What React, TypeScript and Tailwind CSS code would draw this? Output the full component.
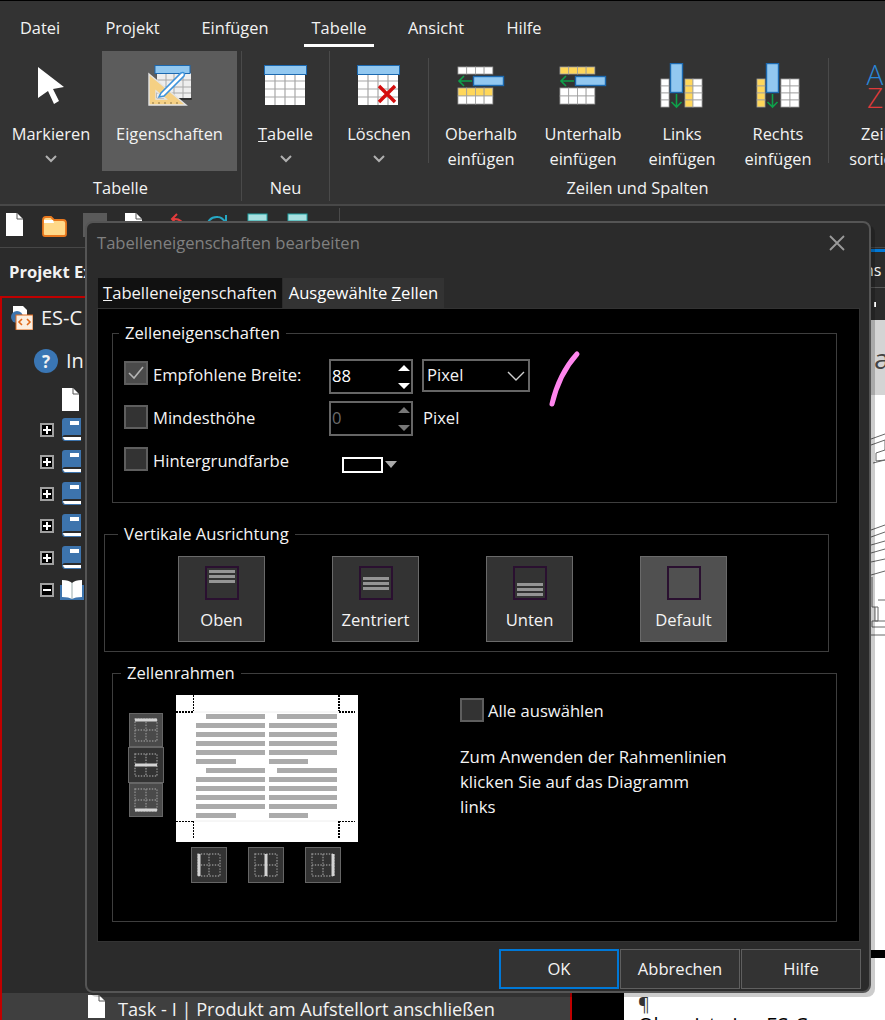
import React from 'react';

const Chevron = () => (
  <svg width="12" height="8" viewBox="0 0 12 8" fill="none" stroke="#b0b0b0" strokeWidth="2">
    <path d="M1 1l5 5 5-5" />
  </svg>
);

// white table with blue header, shared by the ribbon icons
const TableGrid = ({ x = 0, y = 0 }: { x?: number; y?: number }) => (
  <g transform={`translate(${x} ${y})`}>
    <rect x="1" y="9" width="40" height="31" fill="#fff" />
    <path d="M11 9v31M21 9v31M31 9v31M1 16h40M1 24h40M1 32h40" stroke="#a8a8a8" strokeWidth="1.2" />
    <rect x=".5" y=".5" width="42" height="9" fill="#92c8f0" stroke="#1c69b0" />
  </g>
);

const NewTableIcon = () => (
  <svg width="44" height="42" viewBox="0 0 44 42"><TableGrid /></svg>
);

const DeleteTableIcon = () => (
  <svg width="44" height="42" viewBox="0 0 44 42">
    <TableGrid />
    <path d="M22 21l16 16M38 21L22 37" stroke="#d40c0c" strokeWidth="3.4" />
  </svg>
);

const PropsIcon = () => (
  <svg width="44" height="42" viewBox="0 0 44 42">
    <rect x="9" y="8" width="34" height="25" fill="#eee" />
    <path d="M18 8v25M26 8v25M35 8v25M9 15h34M9 22h34M9 28h34" stroke="#a8a8a8" />
    <rect x="7" y=".5" width="35" height="8" fill="#92c8f0" stroke="#1c69b0" />
    <path d="M43 33v1H30" stroke="#222" strokeWidth="1.5" fill="none" />
    <path fillRule="evenodd" d="M1 9l37 31H1zM8 26v8h10z" fill="#f5d084" stroke="#e4e4e4" strokeWidth="1.4" />
    <path d="M5 37v2M11 37v2M17 37v2M23 37v2M29 37v2" stroke="#8a7340" />
    <path d="M13 28L33 8q2-1 3 0t0 3L16 31l-5 1z" fill="#fff" stroke="#3d93dc" strokeWidth="1.6" />
  </svg>
);

const Cells = ({ x, y, cols, rows, w, h, fill }: { x: number; y: number; cols: number; rows: number; w: number; h: number; fill: string }) => (
  <g fill={fill} stroke="#a0a0a0" strokeWidth=".8">
    {Array.from({ length: rows * cols }).map((_, i) => (
      <rect key={i} x={x + (i % cols) * w} y={y + Math.floor(i / cols) * h} width={w} height={h} />
    ))}
  </g>
);

const RowInsertIcon = ({ above }: { above: boolean }) => (
  <svg width="48" height="40" viewBox="0 0 48 40">
    <Cells x={1} y={1} cols={4} rows={1} w={8.7} h={7} fill={above ? '#fff' : '#ffd75a'} />
    <path d="M15 15H2m5-5l-5 5 5 5" fill="none" stroke="#0ea04a" strokeWidth="1.6" />
    <rect x="16.5" y="10.5" width="30" height="9" fill="#92c8f0" stroke="#1c69b0" strokeWidth="1.4" />
    <Cells x={1} y={22} cols={4} rows={1} w={8.7} h={8} fill={above ? '#ffd75a' : '#fff'} />
    <Cells x={1} y={30} cols={4} rows={1} w={8.7} h={8} fill="#fff" />
  </svg>
);

const ColInsertIcon = ({ left }: { left: boolean }) => (
  <svg width="44" height="46" viewBox="0 0 44 46">
    {left ? (
      <>
        <Cells x={1} y={16} cols={1} rows={4} w={8} h={7} fill="#fff" />
        <Cells x={25} y={16} cols={1} rows={4} w={8} h={7} fill="#ffd75a" />
        <Cells x={33} y={16} cols={1} rows={4} w={9} h={7} fill="#fff" />
      </>
    ) : (
      <>
        <Cells x={1} y={16} cols={1} rows={4} w={8} h={7} fill="#ffd75a" />
        <Cells x={25} y={16} cols={2} rows={4} w={9} h={7} fill="#fff" />
      </>
    )}
    <rect x="10.5" y=".5" width="12" height="29" fill="#92c8f0" stroke="#1c69b0" strokeWidth="1.4" />
    <path d="M16.5 31v13m-5-5l5 5 5-5" fill="none" stroke="#0ea04a" strokeWidth="1.6" />
  </svg>
);

const ArrowIcon = () => (
  <svg width="30" height="42" viewBox="0 0 30 42">
    <path d="M2 2l26 20-11 2 6 12-5 3-6-13-10 7z" fill="#fff" />
  </svg>
);

type RibbonButtonProps = {
  icon: React.ReactNode;
  lines: React.ReactNode[];
  chevron?: boolean;
  className: string;
};

const RibbonButton = ({ icon, lines, chevron, className }: RibbonButtonProps) => (
  <div className={`flex h-[120px] shrink-0 flex-col items-center ${className}`}>
    <div className="flex h-[70px] items-center justify-center">{icon}</div>
    {lines.map((l, i) => (
      <div key={i} className="h-[25px] whitespace-nowrap leading-[25px]">{l}</div>
    ))}
    {chevron && <div className="flex h-[25px] items-center"><Chevron /></div>}
  </div>
);

const Ribbon = () => (
  <div className="h-[206px] shrink-0 border-t border-b-2 border-t-black border-b-[#484848] bg-[#333333] text-[16.4px] text-[#f2f2f2]">
    <div className="flex h-[46px] items-end">
      <div className="flex h-[46px] w-[80px] items-center justify-center pt-[8px]">Datei</div>
      <div className="flex h-[46px] w-[105px] items-center justify-center pt-[8px]">Projekt</div>
      <div className="flex h-[46px] w-[100px] items-center justify-center pt-[8px]">Einfügen</div>
      <div className="ml-[19px] flex h-[46px] w-[70px] items-center justify-center border-b-[3px] border-white pt-[11px]">Tabelle</div>
      <div className="ml-[24px] flex h-[46px] w-[76px] items-center justify-center pt-[8px]">Ansicht</div>
      <div className="flex h-[46px] w-[100px] items-center justify-center pt-[8px]">Hilfe</div>
    </div>
    <div className="mt-[4px] flex">
      <div className="flex w-[242px] shrink-0 flex-col border-r border-[#4a4a4a]">
        <div className="flex">
          <RibbonButton className="w-[102px]" icon={<ArrowIcon />} lines={['Markieren']} chevron />
          <RibbonButton className="w-[135px] bg-[#5c5c5c]" icon={<PropsIcon />} lines={['Eigenschaften']} />
        </div>
        <div className="mt-[4px] h-[26px] text-center leading-[26px]">Tabelle</div>
      </div>
      <div className="flex w-[88px] shrink-0 flex-col border-r border-[#4a4a4a]">
        <RibbonButton className="w-[87px]" icon={<NewTableIcon />} lines={[<><u>T</u>abelle</>]} chevron />
        <div className="mt-[4px] h-[26px] text-center leading-[26px]">Neu</div>
      </div>
      <div className="flex w-[615px] shrink-0 flex-col">
        <div className="flex">
          <RibbonButton className="w-[98px]" icon={<DeleteTableIcon />} lines={['Löschen']} chevron />
          <div className="mt-[7px] h-[105px] w-px shrink-0 bg-[#4a4a4a]" />
          <RibbonButton className="w-[104px]" icon={<RowInsertIcon above />} lines={['Oberhalb', 'einfügen']} />
          <RibbonButton className="w-[100px]" icon={<RowInsertIcon above={false} />} lines={['Unterhalb', 'einfügen']} />
          <RibbonButton className="w-[98px]" icon={<ColInsertIcon left />} lines={['Links', 'einfügen']} />
          <RibbonButton className="w-[94px]" icon={<ColInsertIcon left={false} />} lines={['Rechts', 'einfügen']} />
          <div className="ml-[3px] mt-[7px] h-[105px] w-px shrink-0 bg-[#4a4a4a]" />
          <RibbonButton
            className="ml-[15px] w-[80px]"
            icon={
              <div className="mr-[18px] flex flex-col items-center text-[28px] font-light leading-[23px]">
                <span className="text-[#2a86d8]">A</span>
                <span className="text-[#e03a3a]">Z</span>
              </div>
            }
            lines={['Zeilen', 'sortieren']}
          />
        </div>
        <div className="mt-[4px] h-[26px] text-center leading-[26px]">Zeilen und Spalten</div>
      </div>
    </div>
  </div>
);

const DocIcon = ({ className = '' }: { className?: string }) => (
  <svg className={className} width="17" height="23" viewBox="0 0 17 23">
    <path d="M0 0h11l6 6v17H0z" fill="#fff" />
    <path d="M11 0v6h6" fill="none" stroke="#555" strokeWidth="1" />
  </svg>
);

const QuickBar = () => (
  <div className="flex h-[42px] shrink-0 items-start border-b border-[#474747] bg-[#2b2b2b] pt-[7px]">
    <DocIcon className="ml-[6px]" />
    <svg className="ml-[19px] mt-[3px]" width="25" height="21" viewBox="0 0 25 21">
      <path d="M1 4q0-3 3-3h5l3 3h9q3 0 3 3v11q0 2-2 2H3q-2 0-2-2z" fill="#ffd98a" stroke="#e8781e" strokeWidth="1.8" />
      <path d="M2 4h9l1 3H2z" fill="#fff" />
    </svg>
    <div className="ml-[16px] h-[24px] w-[24px] bg-[#5a5a5a]" />
    <DocIcon className="ml-[18px]" />
    <svg className="ml-[21px]" width="24" height="22" viewBox="0 0 24 22">
      <rect x="0" y="11" width="12" height="10" fill="#e59a55" />
      <path d="M21 14q-2-9-11-8M14 1L9 6l5 5" fill="none" stroke="#e23c3c" strokeWidth="2" />
    </svg>
    <svg className="ml-[17px]" width="24" height="22" viewBox="0 0 24 22">
      <path d="M2 16Q4 3 14 4q4 0 8 6M22 2v8h-8" fill="none" stroke="#26a6c2" strokeWidth="2" />
    </svg>
    <svg className="ml-[19px]" width="21" height="22" viewBox="0 0 21 22">
      <rect x="1" y="1" width="19" height="7" fill="#a8e0e0" stroke="#26a6a6" />
      <rect x="1" y="8" width="19" height="14" fill="#ddd" />
    </svg>
    <svg className="ml-[19px]" width="21" height="22" viewBox="0 0 21 22">
      <rect x="1" y="1" width="19" height="7" fill="#a8e0e0" stroke="#26a6a6" />
      <rect x="1" y="8" width="19" height="14" fill="#b070b0" />
    </svg>
    <div className="ml-[31px] mt-[-5px] h-[40px] w-px bg-[#4a4a4a]" />
  </div>
);

const Book = () => (
  <svg width="20" height="24" viewBox="0 0 20 24">
    <path d="M3 0h16v17H3q-2 0-3 2V3q0-3 3-3z" fill="#3d74ad" />
    <rect x="8" y="3" width="9" height="4" fill="#fff" />
    <path d="M1 19h18v3H3q-2 0-2-3z" fill="#fff" />
    <path d="M0 19q0 4 3 4h16v-1H3q-2 0-2-3z" fill="#3d74ad" />
  </svg>
);

const OpenBook = () => (
  <svg width="24" height="20" viewBox="0 0 24 20">
    <path d="M0 5v15h24V5z" fill="#3d74ad" />
    <path d="M2 0q7 0 10 3 3-3 10-3v17q-7 0-10 2-3-2-10-2z" fill="#fff" />
    <path d="M12 3v16" stroke="#9aa" />
  </svg>
);

const Expander = ({ open }: { open?: boolean }) => (
  <div className="flex h-[14px] w-[14px] items-center justify-center border-2 border-[#a0a0a0] bg-black">
    <svg width="10" height="10" viewBox="0 0 10 10">
      <path d={open ? 'M1 5h8' : 'M1 5h8M5 1v8'} stroke="#fff" strokeWidth="2" />
    </svg>
  </div>
);

const TreeBookRow = () => (
  <div className="flex h-[32px] items-center pl-[38px]">
    <Expander />
    <div className="ml-[8px]"><Book /></div>
  </div>
);

const LeftPanel = () => (
  <div className="flex w-[572px] shrink-0 flex-col bg-[#2b2b2b] text-[#f2f2f2]">
    <div className="flex h-[48px] shrink-0 items-center pl-[9px] text-[16.6px] font-bold">Projekt Explorer</div>
    <div className="flex min-h-0 flex-1 flex-col border-x-2 border-t-2 border-[#c00000]">
      <div className="flex h-[40px] items-center pl-[8px] text-[20px]">
        <svg width="23" height="24" viewBox="0 0 23 24">
          <path d="M3 0h10l4 4v6H3z" fill="#fff" />
          <circle cx="7" cy="11" r="6" fill="#3d74ad" />
          <rect x="6" y="9" width="17" height="15" fill="#fbeee0" stroke="#e0691a" />
          <path d="M12 13l-3 3 3 3M17 13l3 3-3 3" fill="none" stroke="#e0691a" strokeWidth="1.6" />
        </svg>
        <span className="ml-[8px]">ES-C</span>
      </div>
      <div className="flex h-[46px] items-center pl-[32px] text-[20px]">
        <div className="flex h-[24px] w-[24px] items-center justify-center rounded-full bg-[#3a76b4] text-[17px] font-bold leading-none">?</div>
        <span className="ml-[8px]">In</span>
      </div>
      <div className="flex h-[30px] items-center pl-[60px]"><DocIcon /></div>
      <TreeBookRow />
      <TreeBookRow />
      <TreeBookRow />
      <TreeBookRow />
      <TreeBookRow />
      <div className="flex h-[32px] items-center pl-[38px]">
        <Expander open />
        <div className="ml-[6px]"><OpenBook /></div>
      </div>
      <div className="mt-auto flex h-[27px] items-center bg-[#3f3f3f] pl-[86px] pt-[6px] text-[18.2px]">
        <DocIcon className="mb-[6px]" />
        <span className="ml-[13px] whitespace-nowrap">Task - I | Produkt am Aufstellort anschließen</span>
      </div>
    </div>
  </div>
);

const DocPane = () => (
  <div className="ml-[52px] flex w-[261px] shrink-0 flex-col">
    <div className="flex h-[40px] shrink-0 flex-col justify-end border-b border-[#555] bg-[#2b2b2b] pl-[240px] text-[#f2f2f2]">
      <div className="h-[3px] w-[40px] bg-[#0078d7]" />
      <div className="flex h-[35px] items-center whitespace-nowrap text-[16px]">ns</div>
    </div>
    <div className="flex h-[32px] shrink-0 items-center bg-[#2b2b2b] pl-[250px]">
      <div className="h-[5px] w-[2px] bg-white" />
    </div>
    <div className="flex h-[75px] shrink-0 items-center bg-[#d4d4d4] pl-[250px] text-[28px] text-[#444]">a</div>
    <div className="flex min-h-0 flex-1 flex-col bg-white text-black">
      <svg className="shrink-0" width="261" height="600" viewBox="0 0 261 600">
        <g fill="none" stroke="#666" strokeWidth="1">
          <path d="M247 44l14-5M247 50l14-5v10l-9 3v8l9-1M249 68l12-3" />
          <path d="M247 135l14-5M247 142l14-5M247 150l14-4M247 158l14-4M247 167l14-3" />
          <path d="M247 180l14-4M248 182v30h6v14h-6v6h13M247 240h14M251 212v14h10M254 205h7" />
        </g>
        <rect x="247" y="555" width="14" height="8" fill="#000" />
      </svg>
      <div className="h-[18px] pl-[14px] text-[18px] leading-[18px] text-[#333]">¶</div>
      <div className="pl-[14px] text-[20px] leading-[24px] whitespace-nowrap">Oben ist eine ES-C</div>
    </div>
  </div>
);

const Checkbox = ({ checked }: { checked?: boolean }) => (
  <div className={`flex h-[24px] w-[24px] shrink-0 items-center justify-center border-2 border-[#5e5e5e] ${checked ? 'bg-[#4a4a4a]' : 'bg-[#333333]'}`}>
    {checked && (
      <svg width="16" height="14" viewBox="0 0 16 14" fill="none" stroke="#b4b4b4" strokeWidth="1.6">
        <path d="M1 7l5 5 9-11" />
      </svg>
    )}
  </div>
);

const SpinBox = ({ value, disabled }: { value: string; disabled?: boolean }) => (
  <div className="flex h-[35px] w-[84px] items-center justify-between border-2 border-[#666] pl-[1px] pr-[1px]">
    <span className={disabled ? 'text-[#6a6a6a]' : 'text-white'}>{value}</span>
    <svg width="12" height="28" viewBox="0 0 12 28" fill={disabled ? '#777' : '#fff'}>
      <path d="M6 2l6 6H0zM0 20h12l-6 6z" />
    </svg>
  </div>
);

type Align = 'top' | 'middle' | 'bottom' | 'none';

const AlignButton = ({ label, align, active }: { label: string; align: Align; active?: boolean }) => (
  <div className={`flex h-[86px] w-[87px] flex-col items-center border border-[#6a6a6a] ${active ? 'bg-[#505050]' : 'bg-[#333333]'}`}>
    <div
      className={`mt-[9px] flex h-[34px] w-[34px] flex-col gap-[2px] border-2 border-[#2a1030] px-[2px] py-[2px] ${
        align === 'top' ? 'justify-start' : align === 'bottom' ? 'justify-end' : 'justify-center'
      }`}
    >
      {align !== 'none' && (
        <>
          <div className="h-[3px] bg-[#949494]" />
          <div className="h-[3px] bg-[#949494]" />
          <div className="h-[3px] bg-[#949494]" />
        </>
      )}
    </div>
    <div className="mt-[8px] leading-[24px]">{label}</div>
  </div>
);

const BorderIcon = ({ bar }: { bar: string }) => (
  <svg width="24" height="24" viewBox="0 0 24 24">
    <g fill="none" stroke="#8c8c8c" strokeWidth="1.4" strokeDasharray="1.4 1.4">
      <rect x="1" y="1" width="22" height="22" />
      <path d="M12 1v22M1 12h22" />
    </g>
    <path d={bar} stroke="#d4d4d4" strokeWidth="3" />
  </svg>
);

const BorderButton = ({ bar, size = 'md', className = 'bg-[#333333]' }: { bar: string; size?: 'sm' | 'md'; className?: string }) => (
  <div className={`flex items-center justify-center border border-[#666] ${size === 'sm' ? 'h-[34px] w-[34px]' : 'h-[36px] w-[36px]'} ${className}`}>
    <BorderIcon bar={bar} />
  </div>
);

const PreviewPage = () => {
  const first = [19, 73];
  const middle = [28, 37, 46, 55, 82, 91, 100, 109];
  const last = [64, 118];
  return (
    <svg className="shrink-0" width="182" height="147" viewBox="0 0 182 147">
      <rect width="182" height="147" fill="#fff" />
      <path d="M18 17h145M18 126h145" stroke="#eee" />
      <g fill="#ababab">
        {first.map((y) => (
          <React.Fragment key={y}>
            <rect x="30" y={y} width="59" height="5" />
            <rect x="101" y={y} width="60" height="5" />
          </React.Fragment>
        ))}
        {middle.map((y) => (
          <React.Fragment key={y}>
            <rect x="20" y={y} width="69" height="5" />
            <rect x="93" y={y} width="68" height="5" />
          </React.Fragment>
        ))}
        {last.map((y) => (
          <React.Fragment key={y}>
            <rect x="20" y={y} width="40" height="5" />
            <rect x="93" y={y} width="39" height="5" />
          </React.Fragment>
        ))}
      </g>
      <g fill="none" stroke="#000">
        <path d="M0 17h17M163 17h16" strokeWidth="2" strokeDasharray="2 1" />
        <path d="M17.5 0v16" strokeDasharray="2 1" />
        <path d="M163 0v16" strokeWidth="2" strokeDasharray="2 1" />
        <path d="M0 126.5h17M163 126.5h16" strokeDasharray="2 1" />
        <path d="M17.5 126v18" strokeDasharray="2 1" />
        <path d="M163 126v18" strokeWidth="2" strokeDasharray="2 1" />
      </g>
    </svg>
  );
};

const Dialog = () => (
  <div className="absolute left-[85px] top-[221px] flex h-[772px] w-[786px] flex-col rounded-lg border-2 border-[#555] bg-[#2b2b2b] text-[#f4f4f4] shadow-[4px_4px_0_rgba(0,0,0,0.2)]">
    <div className="flex h-[40px] shrink-0 items-center justify-between pl-[10px] pr-[24px] text-[#808080]">
      <span>Tabelleneigenschaften bearbeiten</span>
      <svg width="16" height="16" viewBox="0 0 16 16" stroke="#9a9a9a" strokeWidth="1.8">
        <path d="M1 1l14 14M15 1L1 15" />
      </svg>
    </div>
    <div className="ml-[11px] mt-[15px] flex h-[30px] shrink-0">
      <div className="flex w-[184px] items-center justify-center whitespace-nowrap bg-[#111]"><span><u>T</u>abelleneigenschaften</span></div>
      <div className="ml-px flex w-[161px] items-center justify-center whitespace-nowrap bg-[#333333] text-white">Ausgewählte&nbsp;<u>Z</u>ellen</div>
    </div>
    <div className="ml-[10px] flex h-[634px] w-[763px] shrink-0 flex-col border border-[#333] bg-black">
      <fieldset className="ml-[14px] mt-[13px] h-[181px] w-[725px] border border-[#3e3e3e]">
        <legend className="ml-[6px] px-[6px] leading-[22px]">Zelleneigenschaften</legend>
        <div className="pl-[11px]">
          <div className="mt-[15px] flex h-[35px] items-center">
            <div className="mb-[6px] flex w-[205px] items-center">
              <Checkbox checked />
              <span className="ml-[5px] mt-[3px]">Empfohlene Breite:</span>
            </div>
            <SpinBox value="88" />
            <div className="ml-[9px] mb-[2px] flex h-[33px] w-[108px] items-center justify-between border-2 border-[#666] px-[3px]">
              <span>Pixel</span>
              <svg width="18" height="10" viewBox="0 0 18 10" fill="none" stroke="#cfcfcf" strokeWidth="1.4">
                <path d="M1 1l8 8 8-8" />
              </svg>
            </div>
          </div>
          <div className="mt-[7px] flex h-[35px] items-center">
            <div className="mb-[3px] flex w-[205px] items-center">
              <Checkbox />
              <span className="ml-[5px] mt-[2px]">Mindesthöhe</span>
            </div>
            <SpinBox value="0" disabled />
            <span className="ml-[10px]">Pixel</span>
          </div>
          <div className="mt-[11px] flex h-[24px] items-center">
            <div className="flex w-[218px] items-center">
              <Checkbox />
              <span className="ml-[5px] mt-[4px]">Hintergrundfarbe</span>
            </div>
            <div className="mt-[11px] flex items-center">
              <div className="h-[16px] w-[41px] border-2 border-white" />
              <svg className="ml-[2px]" width="12" height="7" viewBox="0 0 12 7" fill="#aaa">
                <path d="M0 0h12L6 7z" />
              </svg>
            </div>
          </div>
        </div>
      </fieldset>
      <fieldset className="ml-[6px] mt-[20px] h-[129px] w-[725px] border border-[#3e3e3e]">
        <legend className="ml-[13px] px-[6px] leading-[22px]">Vertikale Ausrichtung</legend>
        <div className="mt-[11px] flex gap-[67px] pl-[73px]">
          <AlignButton label="Oben" align="top" />
          <AlignButton label="Zentriert" align="middle" />
          <AlignButton label="Unten" align="bottom" />
          <AlignButton label="Default" align="none" active />
        </div>
      </fieldset>
      <fieldset className="ml-[14px] mt-[10px] h-[260px] w-[725px] border border-[#3e3e3e]">
        <legend className="ml-[8px] px-[6px] leading-[22px]">Zellenrahmen</legend>
        <div className="mt-[11px] flex items-start">
          <div className="ml-[15px] mt-[18px] flex w-[36px] flex-col items-center">
            <BorderButton size="sm" className="bg-[#4a4a4a]" bar="M1 2h22" />
            <BorderButton bar="M1 12h22" />
            <BorderButton size="sm" className="bg-[#4a4a4a]" bar="M1 22h22" />
          </div>
          <div className="ml-[12px] flex flex-col items-start">
            <PreviewPage />
            <div className="ml-[15px] mt-[5px] flex gap-[21px]">
              <BorderButton bar="M2 1v22" />
              <BorderButton bar="M12 1v22" />
              <BorderButton bar="M22 1v22" />
            </div>
          </div>
          <div className="ml-[102px] mt-[3px] w-[300px]">
            <div className="flex h-[24px] items-start">
              <Checkbox />
              <span className="ml-[4px] mt-[1px] leading-[24px]">Alle auswählen</span>
            </div>
            <p className="mt-[22px] text-[16.8px] leading-[25px]">
              Zum Anwenden der Rahmenlinien<br />klicken Sie auf das Diagramm<br />links
            </p>
          </div>
        </div>
      </fieldset>
    </div>
    <div className="mt-[7px] flex justify-end pr-[8px]">
      <div className="flex h-[40px] w-[120px] items-center justify-center border-2 border-[#0078d7] bg-[#333333]">OK</div>
      <div className="ml-px flex h-[40px] w-[120px] items-center justify-center border border-[#5f5f5f] bg-[#333333]">Abbrechen</div>
      <div className="ml-px flex h-[40px] w-[120px] items-center justify-center border border-[#5f5f5f] bg-[#333333]">Hilfe</div>
    </div>
    {/* handwritten pen mark over the dialog */}
    <svg className="absolute left-[458px] top-[125px]" width="36" height="62" viewBox="0 0 36 62" fill="none">
      <path d="M32 6Q14 26 7 56" stroke="#ff86ee" strokeWidth="5" strokeLinecap="round" />
    </svg>
  </div>
);

export default function App() {
  return (
    <div className="relative flex h-[1020px] w-[885px] flex-col overflow-hidden bg-black font-['Open_Sans',sans-serif] text-[16.6px]">
      <Ribbon />
      <QuickBar />
      <div className="flex min-h-0 flex-1">
        <LeftPanel />
        <DocPane />
      </div>
      <Dialog />
    </div>
  );
}
